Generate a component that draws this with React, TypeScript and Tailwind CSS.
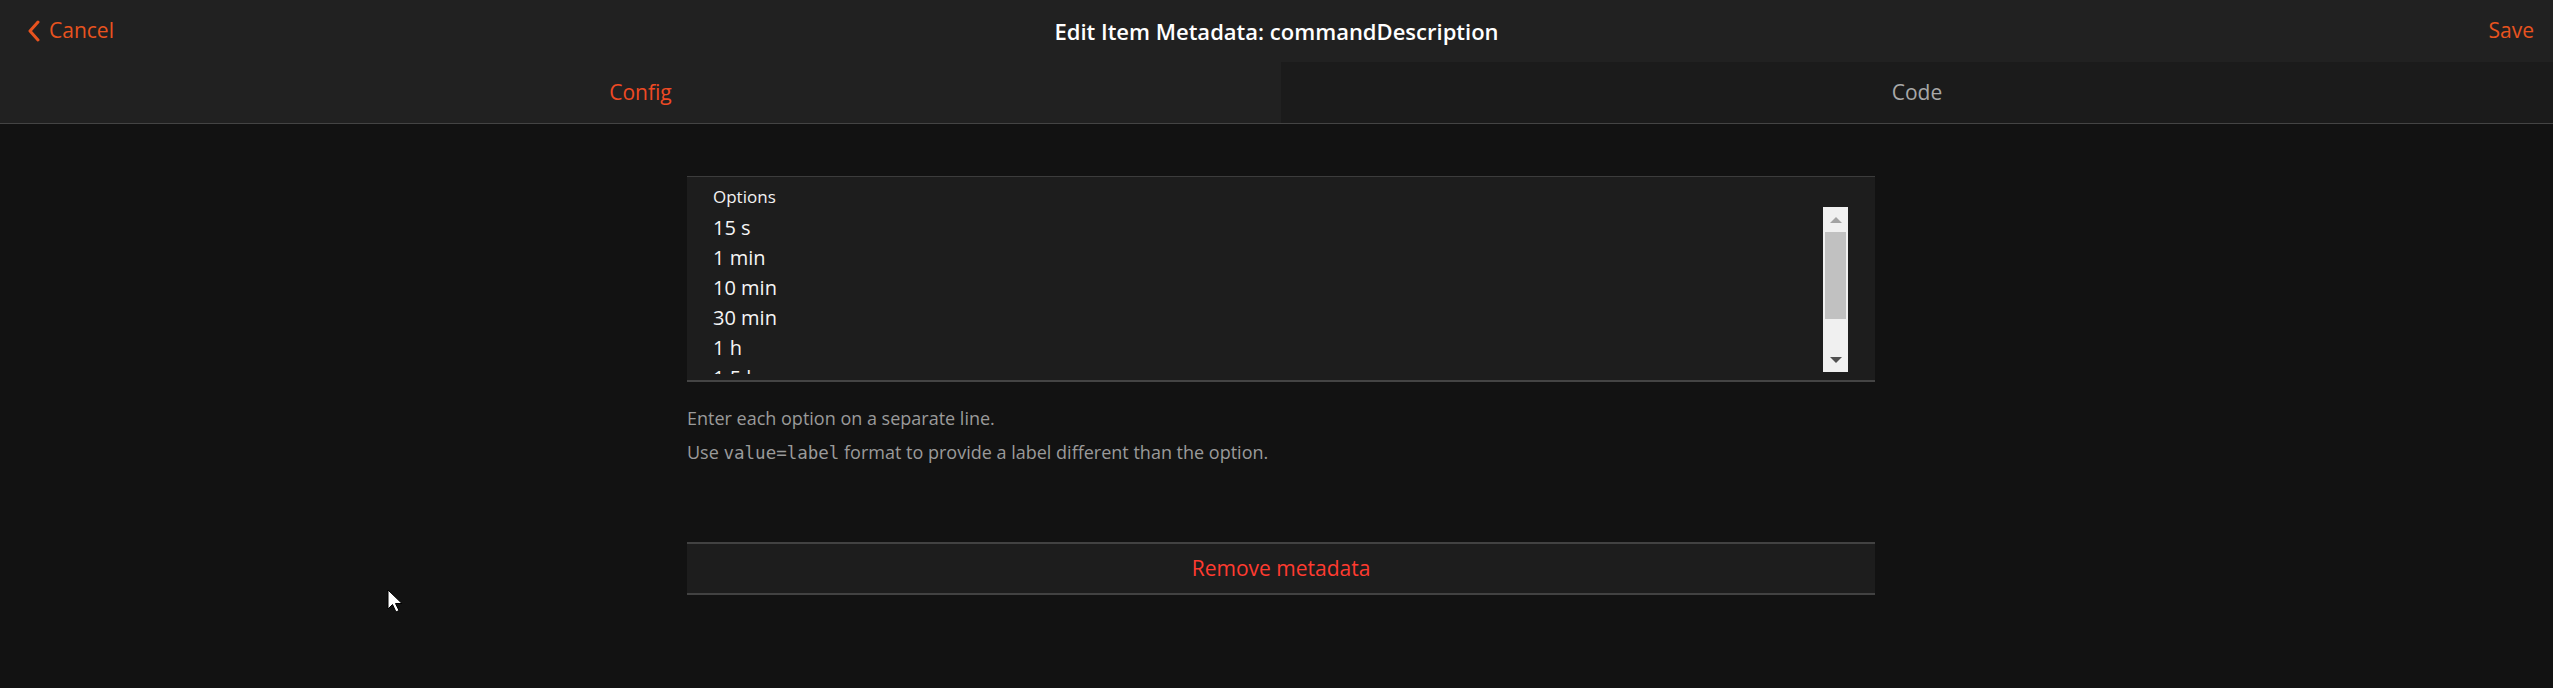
import React from "react";

const options = ["15 s", "1 min", "10 min", "30 min", "1 h", "1.5 h", "2 h", "4 h"];

export default function App() {
  return (
    <div className="relative h-[688px] w-full overflow-hidden bg-[#121212] font-['Open_Sans',sans-serif] text-white">
      {/* Navbar */}
      <div className="relative flex h-[62px] items-center justify-between bg-[#212121] pl-[27px] pr-[19px]">
        <div className="flex items-center gap-[8px] text-[21px] text-[#e8531f]">
          <svg width="14" height="22" viewBox="0 0 14 22" fill="none">
            <path d="M11 2 L3 11 L11 20" stroke="#e8531f" strokeWidth="3" strokeLinecap="round" strokeLinejoin="round" />
          </svg>
          <span>Cancel</span>
        </div>
        <div className="absolute left-0 right-0 text-center text-[22px] font-semibold pointer-events-none">
          Edit Item Metadata: commandDescription
        </div>
        <div className="text-[21px] text-[#e8531f]">Save</div>
      </div>

      {/* Tabs */}
      <div className="flex h-[62px] border-b border-[#444]">
        <div className="flex w-[1281px] items-center justify-center bg-[#212121] text-[21px] text-[#ef4a24]">
          Config
        </div>
        <div className="flex flex-1 items-center justify-center bg-[#1b1b1b] text-[21px] text-[#a8a8a8]">
          Code
        </div>
      </div>

      {/* Content */}
      <div className="ml-[687px] w-[1188px] pt-[52px]">
        <div className="relative h-[206px] border-t border-b-2 border-t-[#3c3c3c] border-b-[#444] bg-[#1d1d1d] pl-[26px]">
          <div className="pt-[10px] text-[17px] leading-[20px] text-[#f2f2f2]">Options</div>
          <div className="mt-[6px] h-[161px] overflow-hidden">
            {options.map((o) => (
              <div key={o} className="text-[20px] leading-[30px] text-[#f5f5f5]">
                {o}
              </div>
            ))}
          </div>
          {/* scrollbar */}
          <div className="absolute right-[27px] top-[30px] flex h-[165px] w-[25px] flex-col items-center bg-[#f0f0f0]">
            <div className="flex h-[25px] items-center justify-center">
              <div className="h-0 w-0 border-x-[6px] border-b-[6px] border-x-transparent border-b-[#a3a3a3]" />
            </div>
            <div className="h-[87px] w-[21px] bg-[#c1c1c1]" />
            <div className="flex-1" />
            <div className="flex h-[25px] items-center justify-center">
              <div className="h-0 w-0 border-x-[6px] border-t-[6px] border-x-transparent border-t-[#505050]" />
            </div>
          </div>
        </div>

        <div className="mt-[25px] text-[18px] leading-[22px] text-[#9a9a9a]">
          <p>Enter each option on a separate line.</p>
          <p className="mt-[12px]">
            Use <code className="font-['DejaVu_Sans_Mono',monospace] text-[17.5px]">value=label</code> format to provide a label different than the option.
          </p>
        </div>

        <div className="mt-[78px] flex h-[53px] items-center justify-center border-y-2 border-[#424242] bg-[#1d1d1d] text-[21px] text-[#ff3b30]">
          Remove metadata
        </div>
      </div>

      {/* mouse cursor */}
      <svg className="absolute left-[387px] top-[589px]" width="18" height="26" viewBox="0 0 18 26">
        <path d="M1 1 L1 20 L5.5 15.5 L9 23 L12 21.5 L8.5 14.5 L15 14.5 Z" fill="#fff" stroke="#000" strokeWidth="1" />
      </svg>
    </div>
  );
}
